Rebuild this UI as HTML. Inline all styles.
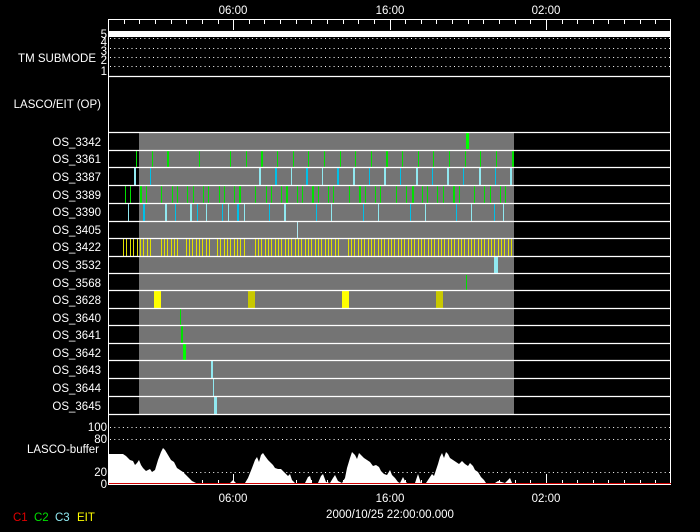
<!DOCTYPE html><html><head><style>body{margin:0;background:#000}svg{display:block}text{font-family:"Liberation Sans",sans-serif;fill:#fff;font-size:11.5px}</style></head><body>
<svg width="700" height="532" viewBox="0 0 700 532" xmlns="http://www.w3.org/2000/svg">
<rect width="700" height="532" fill="#000"/>
<g id="grey" fill="#747474">
<rect x="139" y="133" width="375" height="282"/>
</g>
<g>
<rect x="466" y="133" width="3" height="16" fill="#00ff00"/>
<g fill="#00e000">
<rect x="136" y="151" width="1" height="16"/><rect x="152" y="151" width="1" height="16"/><rect x="167" y="151" width="2" height="16"/><rect x="199" y="151" width="1" height="16"/><rect x="230" y="151" width="1" height="16"/><rect x="246" y="151" width="1" height="16"/><rect x="261" y="151" width="2" height="16"/><rect x="277" y="151" width="1" height="16"/><rect x="293" y="151" width="1" height="16"/><rect x="308" y="151" width="1" height="16"/><rect x="324" y="151" width="1" height="16"/><rect x="340" y="151" width="1" height="16"/><rect x="355" y="151" width="1" height="16"/><rect x="371" y="151" width="1" height="16"/><rect x="386" y="151" width="2" height="16"/><rect x="402" y="151" width="1" height="16"/><rect x="418" y="151" width="1" height="16"/><rect x="433" y="151" width="1" height="16"/><rect x="449" y="151" width="1" height="16"/><rect x="465" y="151" width="1" height="16"/><rect x="480" y="151" width="1" height="16"/><rect x="496" y="151" width="1" height="16"/><rect x="512" y="151" width="2" height="16"/>
</g>
<g>
<rect x="134" y="168" width="2" height="17" fill="#90e8f0"/><rect x="150" y="168" width="1" height="17" fill="#00c0e8"/><rect x="259" y="168" width="2" height="17" fill="#90e8f0"/><rect x="275" y="168" width="2" height="17" fill="#00c0e8"/><rect x="291" y="168" width="1" height="17" fill="#90e8f0"/><rect x="306" y="168" width="2" height="17" fill="#00c0e8"/><rect x="322" y="168" width="1" height="17" fill="#90e8f0"/><rect x="337" y="168" width="2" height="17" fill="#00c0e8"/><rect x="353" y="168" width="2" height="17" fill="#90e8f0"/><rect x="369" y="168" width="1" height="17" fill="#00c0e8"/><rect x="384" y="168" width="2" height="17" fill="#90e8f0"/><rect x="400" y="168" width="1" height="17" fill="#00c0e8"/><rect x="416" y="168" width="2" height="17" fill="#90e8f0"/><rect x="432" y="168" width="1" height="17" fill="#00c0e8"/><rect x="447" y="168" width="2" height="17" fill="#90e8f0"/><rect x="463" y="168" width="1" height="17" fill="#00c0e8"/><rect x="479" y="168" width="2" height="17" fill="#90e8f0"/><rect x="495" y="168" width="1" height="17" fill="#00c0e8"/><rect x="510" y="168" width="2" height="17" fill="#90e8f0"/>
</g>
<g fill="#00e000">
<rect x="125" y="186" width="1" height="17"/><rect x="130" y="186" width="1" height="17"/><rect x="140" y="186" width="2" height="17"/><rect x="146" y="186" width="1" height="17"/><rect x="161" y="186" width="1" height="17"/><rect x="172" y="186" width="1" height="17"/><rect x="177" y="186" width="1" height="17"/><rect x="187" y="186" width="1" height="17"/><rect x="193" y="186" width="1" height="17"/><rect x="203" y="186" width="1" height="17"/><rect x="208" y="186" width="1" height="17"/><rect x="219" y="186" width="1" height="17"/><rect x="224" y="186" width="1" height="17"/><rect x="234" y="186" width="1" height="17"/><rect x="239" y="186" width="2" height="17"/><rect x="255" y="186" width="1" height="17"/><rect x="266" y="186" width="1" height="17"/><rect x="271" y="186" width="1" height="17"/><rect x="281" y="186" width="1" height="17"/><rect x="286" y="186" width="2" height="17"/><rect x="297" y="186" width="1" height="17"/><rect x="302" y="186" width="1" height="17"/><rect x="312" y="186" width="2" height="17"/><rect x="318" y="186" width="1" height="17"/><rect x="328" y="186" width="1" height="17"/><rect x="333" y="186" width="1" height="17"/><rect x="349" y="186" width="1" height="17"/><rect x="359" y="186" width="2" height="17"/><rect x="365" y="186" width="1" height="17"/><rect x="375" y="186" width="1" height="17"/><rect x="380" y="186" width="1" height="17"/><rect x="396" y="186" width="1" height="17"/><rect x="406" y="186" width="1" height="17"/><rect x="412" y="186" width="2" height="17"/><rect x="422" y="186" width="1" height="17"/><rect x="427" y="186" width="1" height="17"/><rect x="437" y="186" width="1" height="17"/><rect x="443" y="186" width="1" height="17"/><rect x="453" y="186" width="2" height="17"/><rect x="459" y="186" width="1" height="17"/><rect x="474" y="186" width="1" height="17"/><rect x="484" y="186" width="1" height="17"/><rect x="490" y="186" width="1" height="17"/><rect x="500" y="186" width="1" height="17"/><rect x="505" y="186" width="1" height="17"/>
</g>
<g>
<rect x="128" y="204" width="1" height="17" fill="#90e8f0"/><rect x="143" y="204" width="2" height="17" fill="#00c0e8"/><rect x="165" y="204" width="2" height="17" fill="#90e8f0"/><rect x="175" y="204" width="1" height="17" fill="#00c0e8"/><rect x="190" y="204" width="2" height="17" fill="#90e8f0"/><rect x="197" y="204" width="1" height="17" fill="#00c0e8"/><rect x="206" y="204" width="1" height="17" fill="#90e8f0"/><rect x="222" y="204" width="1" height="17" fill="#00c0e8"/><rect x="228" y="204" width="1" height="17" fill="#90e8f0"/><rect x="237" y="204" width="2" height="17" fill="#00c0e8"/><rect x="244" y="204" width="1" height="17" fill="#90e8f0"/><rect x="269" y="204" width="1" height="17" fill="#00c0e8"/><rect x="284" y="204" width="2" height="17" fill="#90e8f0"/><rect x="316" y="204" width="1" height="17" fill="#00c0e8"/><rect x="331" y="204" width="1" height="17" fill="#90e8f0"/><rect x="363" y="204" width="1" height="17" fill="#00c0e8"/><rect x="378" y="204" width="1" height="17" fill="#90e8f0"/><rect x="410" y="204" width="1" height="17" fill="#00c0e8"/><rect x="425" y="204" width="1" height="17" fill="#90e8f0"/><rect x="456" y="204" width="1" height="17" fill="#00c0e8"/><rect x="471" y="204" width="1" height="17" fill="#90e8f0"/><rect x="494" y="204" width="1" height="17" fill="#00c0e8"/><rect x="503" y="204" width="1" height="17" fill="#90e8f0"/>
</g>
<rect x="297" y="222" width="1" height="16" fill="#b0e8f0"/>
<g stroke-width="1">
<path d="M123.5 239v17M126.5 239v17M130.5 239v17M133.5 239v17M137.5 239v17M140.5 239v17M143.5 239v17M147.5 239v17M150.5 239v17M161.5 239v17M164.5 239v17M167.5 239v17M171.5 239v17M174.5 239v17M177.5 239v17M186.5 239v17M189.5 239v17M192.5 239v17M196.5 239v17M199.5 239v17M202.5 239v17M206.5 239v17M209.5 239v17M217.5 239v17M220.5 239v17M224.5 239v17M227.5 239v17M230.5 239v17M234.5 239v17M237.5 239v17M240.5 239v17M244.5 239v17M255.5 239v17M258.5 239v17M261.5 239v17M265.5 239v17M268.5 239v17M271.5 239v17M275.5 239v17M278.5 239v17M281.5 239v17M285.5 239v17M288.5 239v17M291.5 239v17M295.5 239v17M298.5 239v17M301.5 239v17M305.5 239v17M308.5 239v17M311.5 239v17M315.5 239v17M318.5 239v17M321.5 239v17M325.5 239v17M328.5 239v17M331.5 239v17M335.5 239v17M338.5 239v17M348.5 239v17M351.5 239v17M354.5 239v17M358.5 239v17M361.5 239v17M364.5 239v17M368.5 239v17M371.5 239v17M374.5 239v17M378.5 239v17M381.5 239v17M384.5 239v17M388.5 239v17M391.5 239v17M394.5 239v17M398.5 239v17M401.5 239v17M404.5 239v17M408.5 239v17M411.5 239v17M414.5 239v17M418.5 239v17M421.5 239v17M424.5 239v17M428.5 239v17M431.5 239v17M434.5 239v17M438.5 239v17M441.5 239v17M444.5 239v17M448.5 239v17M451.5 239v17M454.5 239v17M458.5 239v17M461.5 239v17M464.5 239v17M468.5 239v17M471.5 239v17M474.5 239v17M478.5 239v17M481.5 239v17M484.5 239v17M488.5 239v17M491.5 239v17M494.5 239v17M498.5 239v17M501.5 239v17M504.5 239v17M508.5 239v17M511.5 239v17" stroke="#e0e000"/>
</g>
<rect x="494" y="257" width="4" height="16" fill="#90e8f0"/>
<rect x="466" y="275" width="1" height="15" fill="#00e000"/>
<rect x="154" y="291" width="7" height="17" fill="#ffff00"/>
<rect x="248" y="291" width="7" height="17" fill="#c8c800"/>
<rect x="342" y="291" width="7" height="17" fill="#ffff00"/>
<rect x="436" y="291" width="7" height="17" fill="#c8c800"/>
<rect x="180" y="309" width="1" height="16" fill="#00e000"/>
<rect x="181" y="326" width="2" height="17" fill="#00e000"/>
<rect x="183" y="344" width="3" height="16" fill="#00ff00"/>
<rect x="211" y="361" width="2" height="17" fill="#90e8f0"/>
<rect x="213" y="379" width="1" height="17" fill="#90e8f0"/>
<rect x="214" y="396" width="3" height="18" fill="#90e8f0"/>
</g>
<g stroke="#fff" stroke-width="1.2">
<path d="M108 76.5H671M108 132.5H671M108 150.5H671M108 167.5H671M108 185.5H671M108 203.5H671M108 221.5H671M108 238.5H671M108 256.5H671M108 273.5H671M108 290.5H671M108 308.5H671M108 325.5H671M108 343.5H671M108 360.5H671M108 378.5H671M108 396.5H671M108 414.5H671"/>
</g>
<rect x="108.5" y="19.5" width="562" height="465" fill="none" stroke="#fff" stroke-width="1"/>
<rect x="109" y="31" width="562" height="6" fill="#fff"/>
<g stroke="#fff" stroke-dasharray="1 3.3">
<path d="M110 38.5H671M110 48.5H671M110 57.5H671M110 66.5H671M110 427.5H671M110 439.5H671M110 472.5H671"/>
</g>
<g stroke="#fff">
<path d="M124.5 20v4M139.5 20v4M155.5 20v4M171.5 20v4M186.5 20v4M202.5 20v4M218.5 20v4M233.5 20v10M249.5 20v4M264.5 20v4M280.5 20v4M296.5 20v4M311.5 20v4M327.5 20v4M343.5 20v4M358.5 20v4M374.5 20v4M390.5 20v10M405.5 20v4M421.5 20v4M436.5 20v4M452.5 20v4M468.5 20v4M483.5 20v4M499.5 20v4M515.5 20v4M530.5 20v4M546.5 20v10M562.5 20v4M577.5 20v4M593.5 20v4M608.5 20v4M624.5 20v4M640.5 20v4M655.5 20v4"/>
<path d="M124.5 484v-4M139.5 484v-4M155.5 484v-4M171.5 484v-4M186.5 484v-4M202.5 484v-4M218.5 484v-4M233.5 484v-10M249.5 484v-4M264.5 484v-4M280.5 484v-4M296.5 484v-4M311.5 484v-4M327.5 484v-4M343.5 484v-4M358.5 484v-4M374.5 484v-4M390.5 484v-10M405.5 484v-4M421.5 484v-4M436.5 484v-4M452.5 484v-4M468.5 484v-4M483.5 484v-4M499.5 484v-4M515.5 484v-4M530.5 484v-4M546.5 484v-10M562.5 484v-4M577.5 484v-4M593.5 484v-4M608.5 484v-4M624.5 484v-4M640.5 484v-4M655.5 484v-4"/>
</g>
<polygon fill="#fff" points="109,484 109,454 123,454 126,456 130,460 133,461 135,465 137,463 139,460 141,465 143,468 146,471 148,470 150,469 152,472 155,470 158,460 161,452 163,448 165,450 168,455 171,460 174,462 177,468 180,470 183,472 186,475 189,478 192,481 196,483 230,483 233,480 236,483 245,483 248,478 252,468 255,460 257,457 259,462 261,455 263,453 265,456 268,460 271,463 273,465 275,468 278,469 281,469 284,472 286,474 288,476 290,474 292,480 295,483 305,483 308,477 310,476 312,483 318,483 321,476 323,474 326,482 330,483 333,478 335,475 338,481 342,483 345,478 347,468 350,458 352,452 355,455 357,459 359,453 361,455 364,458 367,460 370,462 373,466 376,465 379,467 381,471 384,474 387,475 390,470 392,475 395,478 398,482 400,483 403,477 405,481 407,483 415,483 418,474 421,483 426,483 430,477 432,474 434,476 436,470 438,464 440,457 442,453 444,458 446,452 448,454 450,458 453,460 456,462 459,464 462,461 465,464 468,466 470,463 473,466 475,470 478,472 481,477 484,480 486,483 495,483 498,481 505,483 510,478 512,483 514,484"/>
<path d="M109 483.5H671" stroke="#d00000" stroke-width="1"/>
<g>
<text x="107" y="38" text-anchor="end" font-size="11">5</text>
<text x="107" y="46" text-anchor="end" font-size="10">4</text>
<text x="107" y="55" text-anchor="end" font-size="10">3</text>
<text x="107" y="64" text-anchor="end" font-size="10">2</text>
<text x="107" y="75" text-anchor="end" font-size="11">1</text>
<text x="96" y="62" text-anchor="end" font-size="12">TM SUBMODE</text>
<text x="101" y="108" text-anchor="end" font-size="12">LASCO/EIT (OP)</text>
<text x="101" y="146" text-anchor="end">OS_3342</text>
<text x="101" y="163" text-anchor="end">OS_3361</text>
<text x="101" y="181" text-anchor="end">OS_3387</text>
<text x="101" y="199" text-anchor="end">OS_3389</text>
<text x="101" y="216" text-anchor="end">OS_3390</text>
<text x="101" y="234" text-anchor="end">OS_3405</text>
<text x="101" y="251" text-anchor="end">OS_3422</text>
<text x="101" y="269" text-anchor="end">OS_3532</text>
<text x="101" y="287" text-anchor="end">OS_3568</text>
<text x="101" y="304" text-anchor="end">OS_3628</text>
<text x="101" y="322" text-anchor="end">OS_3640</text>
<text x="101" y="339" text-anchor="end">OS_3641</text>
<text x="101" y="357" text-anchor="end">OS_3642</text>
<text x="101" y="374" text-anchor="end">OS_3643</text>
<text x="101" y="392" text-anchor="end">OS_3644</text>
<text x="101" y="410" text-anchor="end">OS_3645</text>
<text x="107" y="431" text-anchor="end">100</text>
<text x="107" y="443" text-anchor="end">80</text>
<text x="99" y="453" text-anchor="end" font-size="12">LASCO-buffer</text>
<text x="107" y="476" text-anchor="end">20</text>
<text x="107" y="488" text-anchor="end">0</text>
<text x="233" y="14" text-anchor="middle">06:00</text>
<text x="390" y="14" text-anchor="middle">16:00</text>
<text x="546" y="14" text-anchor="middle">02:00</text>
<text x="233" y="502" text-anchor="middle">06:00</text>
<text x="390" y="502" text-anchor="middle">16:00</text>
<text x="546" y="502" text-anchor="middle">02:00</text>
<text x="390" y="518" text-anchor="middle" font-size="12">2000/10/25 22:00:00.000</text>
<text x="13" y="521" font-size="10" style="fill:#e00000">C1</text>
<text x="34" y="521" font-size="10" style="fill:#00e000">C2</text>
<text x="55" y="521" font-size="10" style="fill:#90e8f0">C3</text>
<text x="77" y="521" font-size="10" style="fill:#ffff00">EIT</text>
</g>
</svg>
</body></html>
